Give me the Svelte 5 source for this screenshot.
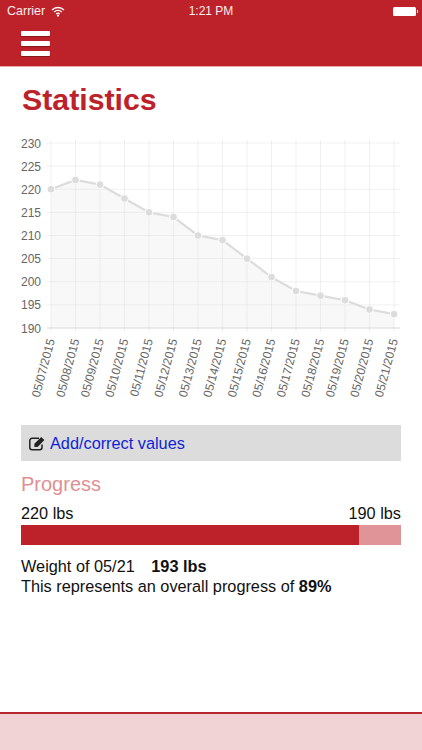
<script>
  const weights = [220, 222, 221, 218, 215, 214, 210, 209, 205, 201, 198, 197, 196, 194, 193];
  const dates = ['05/07', '05/08', '05/09', '05/10', '05/11', '05/12', '05/13', '05/14', '05/15', '05/16', '05/17', '05/18', '05/19', '05/20', '05/21'];
  const ticks = [230, 225, 220, 215, 210, 205, 200, 195, 190];

  const start = 220;
  const goal = 190;
  const current = weights[weights.length - 1];
  const percent = 89;

  // chart coordinates, same numbers as the page so they are easy to check
  const xAt = (i) => 51 + i * 24.5;
  const yAt = (v) => 143 + (230 - v) * 4.625;

  const line = weights.map((w, i) => `${xAt(i)},${yAt(w)}`).join(' ');
  const area = `${xAt(0)},${yAt(190)} ${line} ${xAt(14)},${yAt(190)}`;
</script>

<div class="screen">
  <header class="top">
    <div class="status">
      <div class="status-left">
        <span>Carrier</span>
        <svg class="wifi" width="14" height="11" viewBox="0 0 14 11" aria-hidden="true">
          <path d="M1 4 A8.5 8.5 0 0 1 13 4" />
          <path d="M3.2 6 A5.4 5.4 0 0 1 10.8 6" />
          <path d="M5.2 8 A2.6 2.6 0 0 1 8.8 8" />
          <circle cx="7" cy="9.6" r="1.1" />
        </svg>
      </div>
      <span class="time">1:21 PM</span>
      <div class="battery"><i></i></div>
    </div>
    <nav class="nav">
      <button class="burger" aria-label="Menu"><span></span><span></span><span></span></button>
    </nav>
  </header>

  <main class="content">
    <h1>Statistics</h1>

    <svg class="chart" viewBox="21 125 380 288" width="380" height="288">
      {#each ticks as t}
        <line class="grid" x1="47" x2="400" y1={yAt(t)} y2={yAt(t)} />
        <text class="y-label" x="41" y={yAt(t) + 4.5}>{t}</text>
      {/each}
      {#each dates as d, i}
        <line class="grid" x1={xAt(i)} x2={xAt(i)} y1="140" y2="332" />
        <text class="x-label" transform="translate({xAt(i) + 4} 340) rotate(-75)">{d}/2015</text>
      {/each}
      <line class="axis" x1="47" x2="400" y1={yAt(190)} y2={yAt(190)} />
      <polygon class="area" points={area} />
      <polyline class="trend" points={line} />
      {#each weights as w, i}
        <circle class="dot" cx={xAt(i)} cy={yAt(w)} r="3.9" />
      {/each}
    </svg>

    <a class="edit" href="#values">
      <svg width="17" height="15" viewBox="0 0 17 15" aria-hidden="true">
        <path class="edit-box" d="M13 8.5 V11.5 A2.2 2.2 0 0 1 10.8 13.7 H3 A2.2 2.2 0 0 1 0.8 11.5 V4.5 A2.2 2.2 0 0 1 3 2.3 H10" />
        <path class="edit-pen" d="M5.4 7.8 L12.2 1 L15.4 4.1 L8.6 10.9 H5.4 Z" />
      </svg>
      <span>Add/correct values</span>
    </a>

    <h2>Progress</h2>
    <div class="range"><span>{start} lbs</span><span>{goal} lbs</span></div>
    <div class="bar"><div class="bar-fill" style:width="{percent}%"></div></div>
    <p class="note">Weight of 05/21 <b class="current">{current} lbs</b></p>
    <p class="note">This represents an overall progress of <b>{percent}%</b></p>
  </main>

  <footer class="bottom"></footer>
</div>

<style>
:global(body) {
  margin: 0;
  background: #fff;
}
.screen {
  height: 100vh;
  display: flex;
  flex-direction: column;
  overflow: hidden;
  font-family: "Liberation Sans", Arial, sans-serif;
  color: #111;
}
.top {
  background: #bd2129;
  height: 66px;
  border-bottom: 1px solid #e6a9ac;
  flex: none;
}
.status {
  height: 22px;
  display: flex;
  align-items: center;
  justify-content: space-between;
  padding: 0 7px;
  color: #fbeeee;
  font-size: 12.5px;
  position: relative;
}
.status-left {
  display: flex;
  align-items: center;
  gap: 6px;
}
.wifi path {
  fill: none;
  stroke: #fff;
  stroke-width: 1.3;
}
.wifi circle {
  fill: #fff;
}
.time {
  position: absolute;
  left: 0;
  right: 0;
  text-align: center;
  font-size: 12px;
}
.battery {
  width: 23px;
  height: 9px;
  background: #fff;
  border-radius: 1.5px;
  position: relative;
  margin-right: -1px;
}
.battery i {
  position: absolute;
  right: -2px;
  top: 3px;
  width: 1px;
  height: 3px;
  background: #fff;
}
.nav {
  padding: 9px 21px 0;
}
.burger {
  display: flex;
  flex-direction: column;
  gap: 5px;
  width: 29px;
  padding: 0;
  border: 0;
  background: none;
}
.burger span {
  display: block;
  height: 5px;
  background: #fff;
  border-radius: 1px;
  box-shadow: 0 1px 1px rgba(0, 0, 0, 0.3);
}
.content {
  flex: 1;
  padding: 0 21px;
  min-height: 0;
}
h1 {
  margin: 16px 0 8px 1px;
  font-size: 30.3px;
  line-height: 34px;
  font-weight: bold;
  color: #bd2129;
}
.chart {
  display: block;
  overflow: visible;
}
.grid {
  stroke: rgba(0, 0, 0, 0.06);
  stroke-width: 1;
}
.axis {
  stroke: rgba(0, 0, 0, 0.1);
  stroke-width: 1;
}
.y-label {
  font-size: 12px;
  fill: #666;
  text-anchor: end;
}
.x-label {
  font-size: 12px;
  fill: #666;
  text-anchor: end;
}
.area {
  fill: rgba(220, 220, 220, 0.2);
}
.trend {
  fill: none;
  stroke: #dcdcdc;
  stroke-width: 2.2;
}
.dot {
  fill: #dcdcdc;
  stroke: #fff;
  stroke-width: 1;
}
.edit {
  display: flex;
  align-items: center;
  gap: 4px;
  height: 36px;
  margin-top: 12px;
  padding: 0 8px;
  background: #dcdcdc;
  color: #0f1fd6;
  font-size: 16.3px;
  text-decoration: none;
}
.edit-box {
  fill: none;
  stroke: #222;
  stroke-width: 1.5;
}
.edit-pen {
  fill: #222;
}
h2 {
  margin: 12px 0 0;
  font-size: 20px;
  line-height: 23px;
  font-weight: normal;
  color: #df9094;
}
.range {
  display: flex;
  justify-content: space-between;
  margin-top: 7px;
  font-size: 16.3px;
  line-height: 20px;
}
.bar {
  height: 20px;
  margin: 2px 0 11px;
  background: #e09498;
}
.bar-fill {
  height: 100%;
  background: #bd2129;
}
.note {
  margin: 0;
  font-size: 16.3px;
  line-height: 20px;
}
.current {
  margin-left: 12px;
}
.bottom {
  flex: none;
  height: 36px;
  background: #f2d3d5;
  border-top: 2px solid #b5282f;
}
</style>
